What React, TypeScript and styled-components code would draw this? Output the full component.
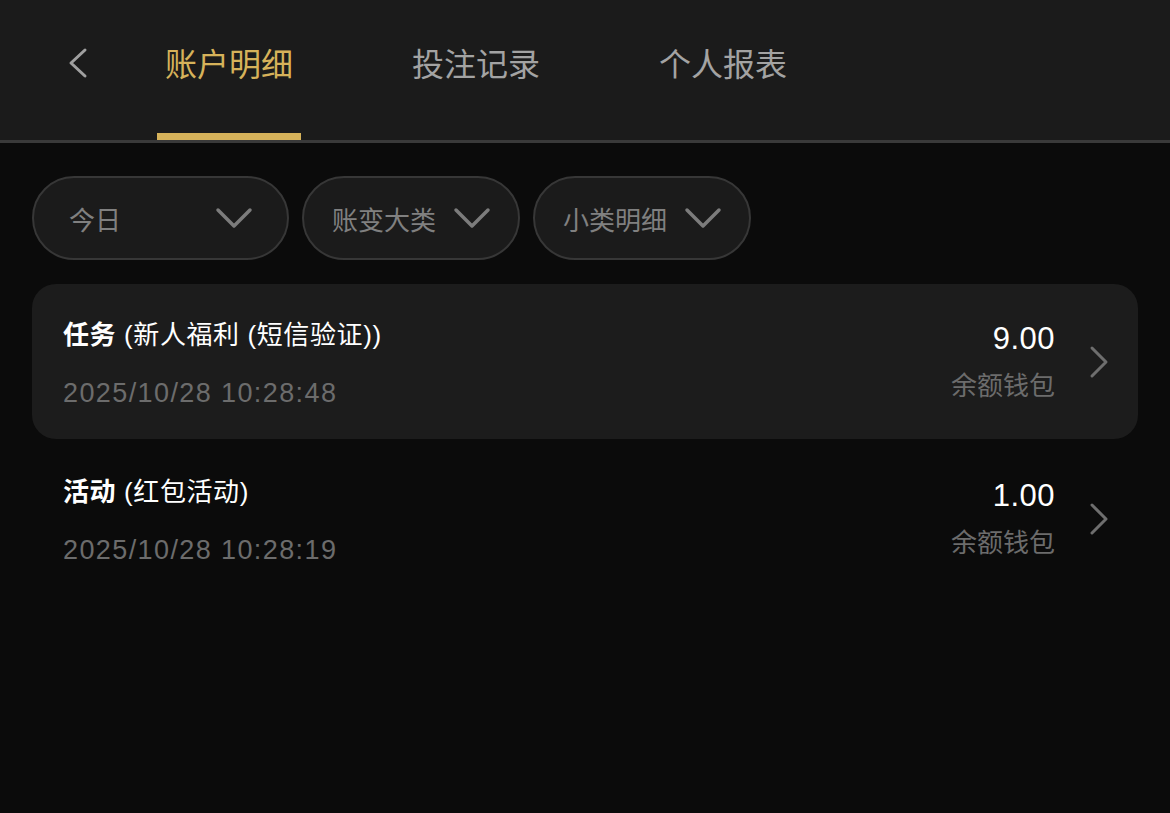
import React, { useState } from "react";
import styled, { createGlobalStyle } from "styled-components";

const GlobalStyle = createGlobalStyle`
  html, body {
    margin: 0;
    padding: 0;
    background: #0b0b0b;
  }
  body {
    font-family: "Liberation Sans", "Noto Sans CJK SC", sans-serif;
    color: #fff;
  }
  * { box-sizing: border-box; }
`;

type Record = {
  id: number;
  kind: string;
  detail: string;
  time: string;
  amount: string;
  wallet: string;
};

const records: Record[] = [
  { id: 1, kind: "任务", detail: "(新人福利 (短信验证))", time: "2025/10/28 10:28:48", amount: "9.00", wallet: "余额钱包" },
  { id: 2, kind: "活动", detail: "(红包活动)", time: "2025/10/28 10:28:19", amount: "1.00", wallet: "余额钱包" },
];

const tabs = ["账户明细", "投注记录", "个人报表"];

const filters = [
  { label: "今日", width: 257, pad: 35 },
  { label: "账变大类", width: 218, pad: 28 },
  { label: "小类明细", width: 218, pad: 28 },
];

const ChevronLeft = () => (
  <svg width="22" height="32" viewBox="0 0 22 32" fill="none">
    <path d="M19 3 L5 16 L19 29" stroke="#a0a0a0" strokeWidth="3" strokeLinecap="round" strokeLinejoin="round" />
  </svg>
);

const ChevronDown = () => (
  <svg width="38" height="22" viewBox="0 0 38 22" fill="none">
    <path d="M3 3 L19 19 L35 3" stroke="#7c7c7c" strokeWidth="3.5" strokeLinecap="round" strokeLinejoin="round" />
  </svg>
);

const ChevronRight = () => (
  <svg width="22" height="34" viewBox="0 0 22 34" fill="none">
    <path d="M4 3 L18 17 L4 31" stroke="#6e6e6e" strokeWidth="3" strokeLinecap="round" strokeLinejoin="round" />
  </svg>
);

export default function App() {
  const [active, setActive] = useState(0);

  return (
    <>
      <GlobalStyle />
      <Page>
        <Header>
          <BackButton>
            <ChevronLeft />
          </BackButton>
          <Tabs>
            {tabs.map((t, i) => (
              <Tab key={t} $active={i === active} onClick={() => setActive(i)}>
                {t}
              </Tab>
            ))}
          </Tabs>
        </Header>

        <Filters>
          {filters.map((f) => (
            <Pill key={f.label} $width={f.width} $pad={f.pad}>
              <PillLabel>{f.label}</PillLabel>
              <ChevronDown />
            </Pill>
          ))}
        </Filters>

        <List>
          {records.map((r, i) => (
            <Row key={r.id} $highlight={i === 0}>
              <Left>
                <Title>
                  <Kind>{r.kind}</Kind> {r.detail}
                </Title>
                <Time>{r.time}</Time>
              </Left>
              <Right>
                <Amount>{r.amount}</Amount>
                <Wallet>{r.wallet}</Wallet>
              </Right>
              <Arrow>
                <ChevronRight />
              </Arrow>
            </Row>
          ))}
        </List>
      </Page>
    </>
  );
}

const Page = styled.div`
  width: 1170px;
  min-height: 813px;
  background: #0b0b0b;
`;

const Header = styled.div`
  height: 143px;
  background: #1b1b1b;
  border-bottom: 3px solid #3a3a3a;
  display: flex;
  align-items: stretch;
  padding-left: 66px;
`;

const BackButton = styled.div`
  width: 91px;
  display: flex;
  align-items: center;
  padding-bottom: 14px;
`;

const Tabs = styled.div`
  display: flex;
  gap: 103px;
`;

const Tab = styled.div<{ $active: boolean }>`
  padding: 0 8px 10px;
  display: flex;
  align-items: center;
  font-size: 32px;
  color: ${(p) => (p.$active ? "#d6b25a" : "#a3a3a3")};
  border-bottom: 7px solid ${(p) => (p.$active ? "#d6b25a" : "transparent")};
  cursor: pointer;
`;

const Filters = styled.div`
  display: flex;
  gap: 13px;
  padding: 33px 0 0 32px;
`;

const Pill = styled.div<{ $width: number; $pad: number }>`
  width: ${(p) => p.$width}px;
  height: 84px;
  border-radius: 42px;
  background: #1b1b1b;
  border: 2px solid #373737;
  display: flex;
  align-items: center;
  justify-content: space-between;
  padding: 0 ${(p) => p.$pad - 1}px 0 ${(p) => p.$pad}px;
`;

const PillLabel = styled.span`
  font-size: 26px;
  color: #808080;
`;

const List = styled.div`
  padding: 24px 32px 0;
`;

const Row = styled.div<{ $highlight: boolean }>`
  height: 155px;
  border-radius: 24px;
  background: ${(p) => (p.$highlight ? "#1c1c1c" : "transparent")};
  display: flex;
  align-items: center;
  padding: 0 28px 0 31px;
  margin-bottom: 2px;
`;

const Left = styled.div`
  flex: 1;
  display: flex;
  flex-direction: column;
  gap: 27px;
`;

const Title = styled.div`
  font-size: 26px;
  color: #ffffff;
  letter-spacing: 0.6px;
`;

const Kind = styled.span`
  font-weight: 700;
`;

const Time = styled.div`
  font-size: 27px;
  letter-spacing: 1.4px;
  color: #6c6c6c;
`;

const Right = styled.div`
  display: flex;
  flex-direction: column;
  align-items: flex-end;
  gap: 8px;
`;

const Amount = styled.div`
  font-size: 31px;
  color: #ffffff;
  letter-spacing: 0.5px;
`;

const Wallet = styled.div`
  font-size: 26px;
  color: #6c6c6c;
`;

const Arrow = styled.div`
  margin-left: 33px;
  display: flex;
  align-items: center;
`;
